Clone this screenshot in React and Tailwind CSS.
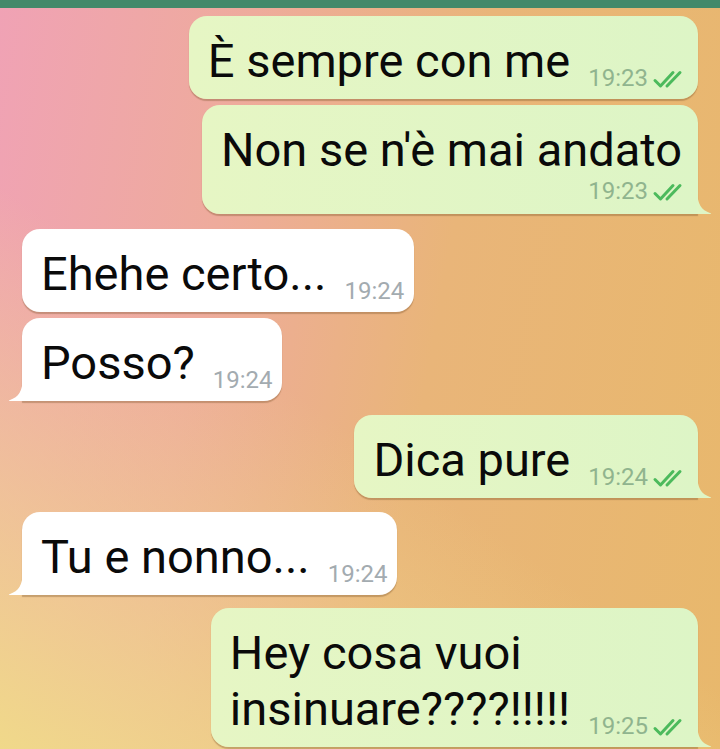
import { Fragment } from "react";

const messages = [
  { id: 1, out: true, lines: ["È sempre con me"], time: "19:23", tail: false },
  { id: 2, out: true, lines: ["Non se n'è mai andato"], time: "19:23", tail: true, timeBelow: true, gap: "mt-[6px]" },
  { id: 3, out: false, lines: ["Ehehe certo..."], time: "19:24", tail: false, gap: "mt-[15px]" },
  { id: 4, out: false, lines: ["Posso?"], time: "19:24", tail: true, gap: "mt-[6px]" },
  { id: 5, out: true, lines: ["Dica pure"], time: "19:24", tail: true, gap: "mt-[14px]" },
  { id: 6, out: false, lines: ["Tu e nonno..."], time: "19:24", tail: true, gap: "mt-[14px]" },
  { id: 7, out: true, lines: ["Hey cosa vuoi", "insinuare????!!!!!"], time: "19:25", tail: true, gap: "mt-[13px]" },
];

function DoubleCheck() {
  return (
    <svg width="36" height="20" viewBox="0 0 36 20" fill="none" className="ml-[4px] mb-[2px]">
      <path d="M3 11.5 L8.5 17 L21 3.5" stroke="#4cba5c" strokeWidth="3" strokeLinecap="round" strokeLinejoin="round" />
      <path d="M15 17 L28 3.5" stroke="#4cba5c" strokeWidth="3" strokeLinecap="round" />
    </svg>
  );
}

function Tail({ out }) {
  const fill = out ? "#dff5c5" : "#ffffff";
  if (out) {
    return (
      <svg width="15" height="24" viewBox="0 0 15 24" className="absolute bottom-0 right-[-14px]">
        <path d="M0 0 C0.5 14 4 20 13.5 23.2 C14.6 23.6 14.2 24 13 24 L0 24 Z" fill={fill} />
      </svg>
    );
  }
  return (
    <svg width="15" height="24" viewBox="0 0 15 24" className="absolute bottom-0 left-[-14px]">
      <path d="M15 0 C14.5 14 11 20 1.5 23.2 C0.4 23.6 0.8 24 2 24 L15 24 Z" fill={fill} />
    </svg>
  );
}

function Meta({ time, out }) {
  return (
    <div className="flex items-end shrink-0">
      <span className={`text-[24px] leading-[26px] ${out ? "text-[#90b48e]" : "text-[#a3abb0]"}`}>{time}</span>
      {out && <DoubleCheck />}
    </div>
  );
}

function Bubble({ msg }) {
  const { out, lines, time, tail, timeBelow } = msg;
  const text = (
    <div className="text-[47px] leading-[56px] text-[#0a0a0a] pr-[6px]">
      {lines.map((l, i) => (
        <Fragment key={i}>
          {i > 0 && <br />}
          {l}
        </Fragment>
      ))}
    </div>
  );
  return (
    <div
      className={`relative w-fit pl-[19px] pr-[10px] pt-[17px] pb-[10px] shadow-[0_1.5px_1px_rgba(120,80,40,0.35)] ${
        out
          ? "self-end mr-[22px] bg-[linear-gradient(90deg,#e6f6c4,#ddf5c6)] rounded-[18px]"
          : "self-start ml-[22px] bg-white rounded-[18px]"
      } ${tail ? (out ? "rounded-br-none" : "rounded-bl-none") : ""} ${msg.gap || ""}`}
    >
      {timeBelow ? (
        <div className="flex flex-col">
          {text}
          <div className="self-end">
            <Meta time={time} out={out} />
          </div>
        </div>
      ) : (
        <div className="flex items-end">
          {text}
          <div className="ml-[12px] translate-y-[2px]">
            <Meta time={time} out={out} />
          </div>
        </div>
      )}
      {tail && <Tail out={out} />}
    </div>
  );
}

export default function App() {
  return (
    <div
      className="w-[720px] h-[749px] overflow-hidden flex flex-col bg-[linear-gradient(35deg,#f0d98a_0%,rgba(240,200,140,0)_45%),linear-gradient(100deg,#f0a2b5_0%,#eeab9c_30%,#e9b579_58%,#e8b86c_100%)]"
      style={{ fontFamily: "Roboto, 'Noto Sans', sans-serif" }}
    >
      <div className="h-[8px] bg-[#43896a] shrink-0" />
      <div className="flex flex-col pt-[8px]">
        {messages.map((m) => (
          <Bubble key={m.id} msg={m} />
        ))}
      </div>
    </div>
  );
}
